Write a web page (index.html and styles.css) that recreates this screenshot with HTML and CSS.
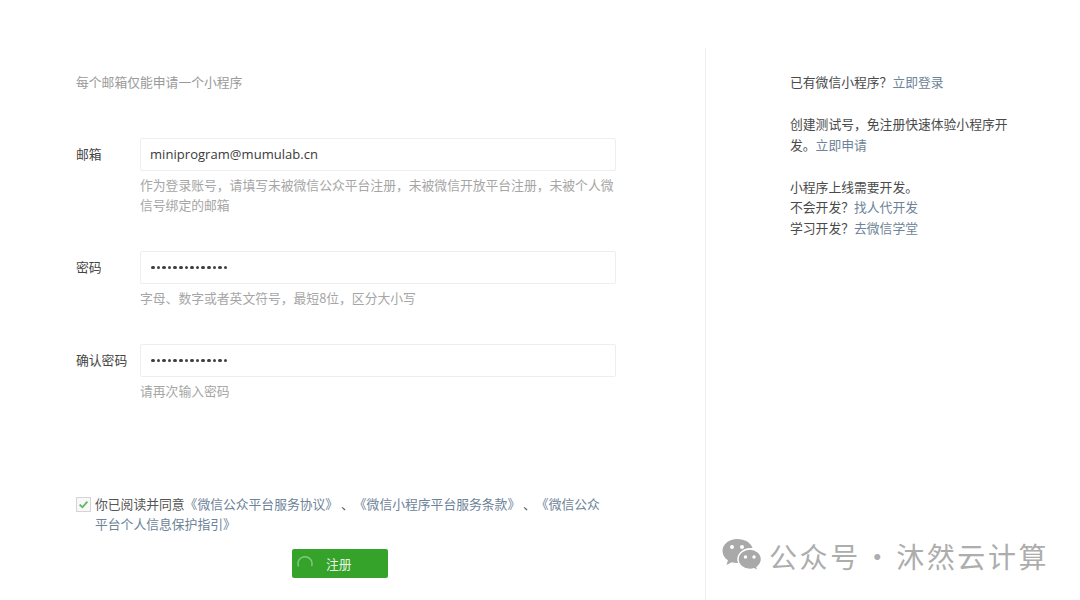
FILE: index.html
```html
<!DOCTYPE html>
<html lang="zh-CN">
<head>
<meta charset="utf-8">
<title>小程序注册</title>
<link rel="stylesheet" href="styles.css">
</head>
<body>
<main class="page">
  <section class="form-col">
    <p class="notice">每个邮箱仅能申请一个小程序</p>
    <div class="field field-email">
      <label class="field-label">邮箱</label>
      <div class="field-body">
        <div class="input">miniprogram@mumulab.cn</div>
        <p class="tip">作为登录账号，请填写未被微信公众平台注册，未被微信开放平台注册，未被个人微信号绑定的邮箱</p>
      </div>
    </div>
    <div class="field field-pass">
      <label class="field-label">密码</label>
      <div class="field-body">
        <div class="input input-pass"><span class="dots"><i></i><i></i><i></i><i></i><i></i><i></i><i></i><i></i><i></i><i></i><i></i><i></i><i></i><i></i></span></div>
        <p class="tip">字母、数字或者英文符号，最短8位，区分大小写</p>
      </div>
    </div>
    <div class="field field-confirm">
      <label class="field-label">确认密码</label>
      <div class="field-body">
        <div class="input input-pass"><span class="dots"><i></i><i></i><i></i><i></i><i></i><i></i><i></i><i></i><i></i><i></i><i></i><i></i><i></i><i></i></span></div>
        <p class="tip">请再次输入密码</p>
      </div>
    </div>
    <div class="agree">
      <span class="check">
        <svg viewBox="0 0 14 14" width="13" height="13"><path d="M2.800 7.200 5.800 10 11.200 4" fill="none" stroke="#62b862" stroke-width="2"/></svg>
      </span>
      <p class="agree-text">你已阅读并同意<a>《微信公众平台服务协议》</a> 、<a>《微信小程序平台服务条款》</a> 、<a>《微信公众平台个人信息保护指引》</a></p>
    </div>
    <div class="submit-row">
      <button class="submit" type="button">
        <svg class="spinner" viewBox="0 0 16 16" width="16" height="16"><path d="M1.600 10.500A7 7 0 1 1 14.600 10" fill="none" stroke="#7cc97c" stroke-width="1.500"/></svg>
        <span>注册</span>
      </button>
    </div>
  </section>
  <aside class="side-col">
    <p class="side-block">已有微信小程序？<a>立即登录</a></p>
    <p class="side-block">创建测试号，免注册快速体验小程序开发。<a>立即申请</a></p>
    <p class="side-block">小程序上线需要开发。<br>不会开发？<a>找人代开发</a><br>学习开发？<a>去微信学堂</a></p>
  </aside>
</main>
<div class="watermark">
  <svg class="wm-icon" viewBox="0 0 40 36" width="40" height="36">
    <path d="M15 1C7 1 .5 6.300.5 13c0 3.800 2.100 7.100 5.400 9.300L4.500 27l5.200-2.700c1.700.5 3.500.8 5.300.8.600 0 1.200 0 1.800-.1-.4-1.200-.6-2.400-.6-3.700C16.200 14.700 22 10 29.300 10c.4 0 .8 0 1.200.1C29.200 4.800 22.700 1 15 1Z" fill="#a9a9a9"/>
    <path d="M39.500 21.200c0-5.800-5.500-10.200-11.500-10.200-6.500 0-12 4.500-12 10.200 0 5.800 5.500 10.200 12 10.200 1.400 0 2.700-.2 4-.6l4.200 2.400-1.200-3.900c2.700-2 4.500-4.800 4.500-8.100Z" fill="#a9a9a9" stroke="#fff" stroke-width="1.500"/>
    <circle cx="10" cy="9" r="2" fill="#fff"/><circle cx="20" cy="9" r="2" fill="#fff"/>
    <circle cx="23.500" cy="19" r="1.700" fill="#fff"/><circle cx="32" cy="19" r="1.700" fill="#fff"/>
  </svg>
  <span class="wm-text">公众号 · 沐然云计算</span>
</div>
</body>
</html>
```

FILE: styles.css
```css
* { box-sizing: border-box; }
html, body { margin: 0; height: 100%; background: #fff; overflow: hidden; }
body {
  font-family: "Noto Sans CJK SC", "Noto Sans", sans-serif;
  font-size: 12.8px;
  color: #444;
  text-spacing-trim: space-all;
  font-feature-settings: "chws" 0, "palt" 0;
}
p { margin: 0; }
a { color: #6d8399; }

.page { display: flex; height: 600px; padding-top: 48px; }

.form-col {
  width: 706px;
  height: 552px;
  padding: 24px 89px 0 76px;
  border-right: 1px solid #eeeeee;
  flex: none;
}
.notice { line-height: 20px; color: #9a9a9a; }

.field { display: flex; }
.field-email { margin-top: 46px; }
.field-pass { margin-top: 36px; }
.field-confirm { margin-top: 36px; }
.field-label { width: 64px; flex: none; line-height: 32px; }
.field-body { flex: 1; min-width: 0; }

.input {
  height: 33px;
  line-height: 31px;
  padding: 0 9px;
  border: 1px solid #eeeeee;
  border-radius: 2px;
  font-family: "Open Sans", sans-serif;
  font-size: 13px;
  letter-spacing: 0.050px;
  color: #3a3a3a;
}
.input-pass { display: flex; align-items: center; padding-left: 10px; }
.dots { display: flex; gap: 2px; }
.dots i { width: 3.600px; height: 3.600px; border-radius: 50%; background: #404040; }

.tip { margin-top: 4px; line-height: 20px; color: #a6a6a6; }

.agree { display: flex; margin-top: 93px; }
.check {
  width: 15px;
  height: 15px;
  margin: 3px 4px 0 0;
  flex: none;
  border: 1px solid #d4d4d4;
  background: #f8f8f8;
  display: flex;
  align-items: center;
  justify-content: center;
}
.agree-text { line-height: 20px; width: 508px; color: #555; }

.submit-row { display: flex; margin-top: 15px; padding-left: 216px; }
.submit {
  display: flex;
  align-items: center;
  width: 96px;
  height: 29px;
  padding: 0 0 0 5px;
  border: 0;
  border-radius: 2px;
  background: #35a22a;
  color: #e6f4e4;
  font-family: inherit;
  font-size: 12.800px;
}
.spinner { flex: none; margin-right: 13px; }

.side-col { flex: 1; padding: 24px 60px 0 84px; line-height: 20.500px; color: #4a4a4a; }
.side-block { margin-bottom: 21.500px; }

.watermark {
  position: absolute;
  left: 722px;
  top: 538px;
  display: flex;
  align-items: center;
  gap: 7px;
}
.wm-text { font-size: 28px; line-height: 36px; color: #adadad; letter-spacing: 2.600px; word-spacing: -6.500px; white-space: nowrap; }
```
